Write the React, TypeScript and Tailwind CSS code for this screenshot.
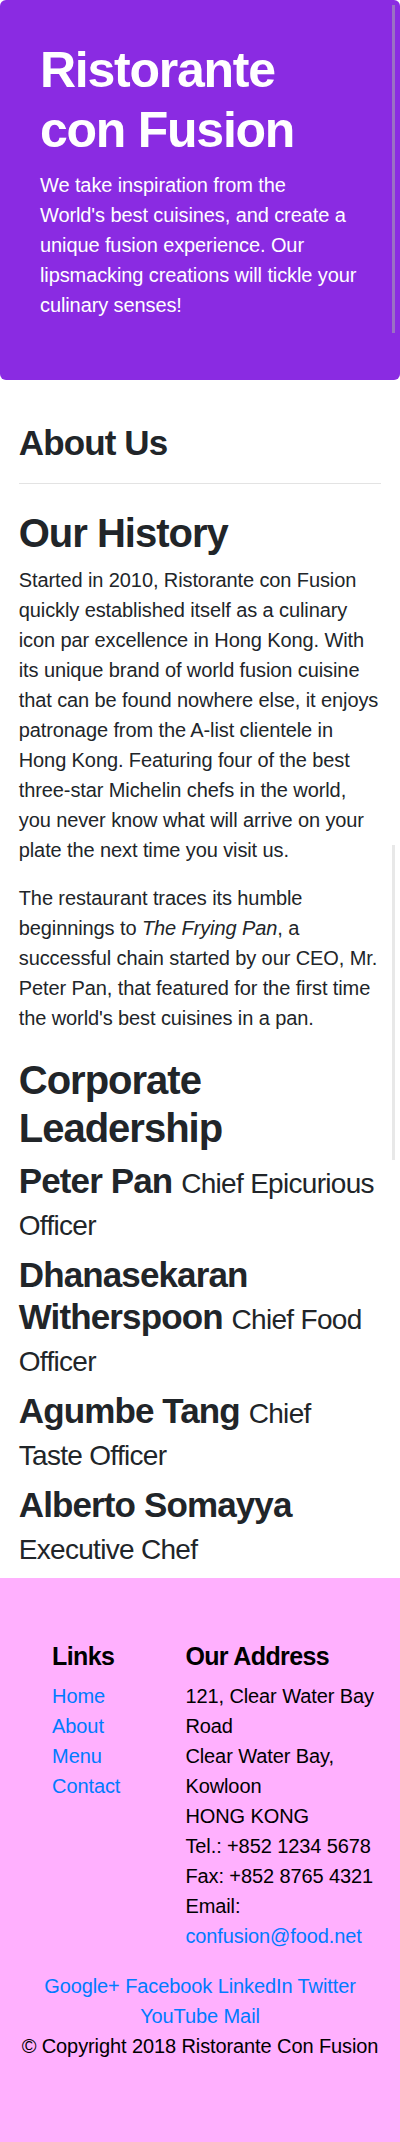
const leaders = [
  { name: "Peter Pan", role: "Chief Epicurious Officer" },
  { name: "Dhanasekaran Witherspoon", role: "Chief Food Officer" },
  { name: "Agumbe Tang", role: "Chief Taste\u00a0Officer" },
  { name: "Alberto Somayya", role: "Executive Chef" },
];

const links = ["Home", "About", "Menu", "Contact"];
const socials = ["Google+", "Facebook", "LinkedIn", "Twitter", "YouTube", "Mail"];

export default function App() {
  return (
    <div className="relative flex min-h-[2142px] flex-col bg-white font-['Liberation_Sans',Arial,sans-serif] text-[20px] leading-[30px] tracking-[-0.1px] text-[#212529]">
      {/* jumbotron */}
      <header className="relative rounded-md bg-[#8a2be2] pt-10 pr-[38px] pb-10 pl-10 text-white">
        <h1 className="mb-[10px] text-[50px] leading-[60px] font-bold tracking-[-0.025em]">
          Ristorante con Fusion
        </h1>
        <p className="mb-5">
          We take inspiration from the
          <br />
          World's best cuisines, and create a
          <br />
          unique fusion experience. Our
          <br />
          lipsmacking creations will tickle your
          <br />
          culinary senses!
        </p>
        <span className="absolute top-[5px] right-[5px] h-[328px] w-[3px] bg-[#9a70c4]" />
      </header>

      <main className="px-[18.75px]">
        <h3 className="mt-[42px] text-[35px] leading-[42px] font-bold tracking-[-0.025em]">About Us</h3>
        <hr className="mt-[19px] h-px border-0 bg-[#e3e3e3]" />

        <h2 className="mt-[25px] mb-2 text-[40px] leading-[48px] font-bold tracking-[-0.025em]">Our History</h2>
        <p className="mb-[18px]">
          Started in 2010, Ristorante con Fusion quickly established itself as a culinary icon par
          excellence in Hong Kong. With its unique brand of world fusion cuisine that can be found
          nowhere else, it enjoys patronage from the A-list clientele in Hong Kong. Featuring four of
          the best three-star Michelin chefs in the world, you never know what will arrive on your
          plate the next time you visit us.
        </p>
        <p className="mb-[23px]">
          The restaurant traces its humble beginnings to <em>The Frying Pan</em>, a successful chain
          started by our CEO, Mr. Peter Pan, that featured for the first time the world's best
          cuisines in a pan.
        </p>

        <h2 className="mb-2 text-[40px] leading-[48px] font-bold tracking-[-0.025em]">Corporate Leadership</h2>
        {leaders.map((l) => (
          <h3 key={l.name} className="mb-[10px] text-[35px] leading-[42px] font-bold tracking-[-0.025em]">
            {l.name}{" "}
            <small className="text-[28px] leading-none font-normal tracking-[-0.025em]">{l.role}</small>
          </h3>
        ))}
      </main>

      <footer className="flex-1 bg-[#ffb0fe] pt-[63px] text-black">
        <div className="grid grid-cols-12">
          <div className="col-span-4 col-start-2 px-[18.75px]">
            <h5 className="mb-[10px] text-[25px] leading-[30px] font-bold tracking-[-0.025em]">Links</h5>
            <ul>
              {links.map((item) => (
                <li key={item}>
                  <a href="#" className="text-[#007bff]">
                    {item}
                  </a>
                </li>
              ))}
            </ul>
          </div>
          <div className="col-span-7 px-[18.75px]">
            <h5 className="mb-[10px] text-[25px] leading-[30px] font-bold tracking-[-0.025em]">Our Address</h5>
            <address className="mb-5 not-italic">
              121, Clear Water Bay Road
              <br />
              Clear Water Bay, Kowloon
              <br />
              HONG KONG
              <br />
              Tel.: +852 1234 5678
              <br />
              Fax: +852 8765 4321
              <br />
              Email:{" "}
              <a href="#" className="text-[#007bff]">
                confusion@food.net
              </a>
            </address>
          </div>
        </div>
        <div className="px-[18.75px] text-center">
          {socials.map((s, i) => (
            <span key={s}>
              <a href="#" className="text-[#007bff]">
                {s}
              </a>
              {i < socials.length - 1 ? " " : ""}
            </span>
          ))}
        </div>
        <p className="px-[18.75px] text-center">© Copyright 2018 Ristorante Con Fusion</p>
      </footer>

      <span className="absolute top-[845px] right-[5px] h-[315px] w-[3px] bg-[#e8e8e8]" />
    </div>
  );
}
